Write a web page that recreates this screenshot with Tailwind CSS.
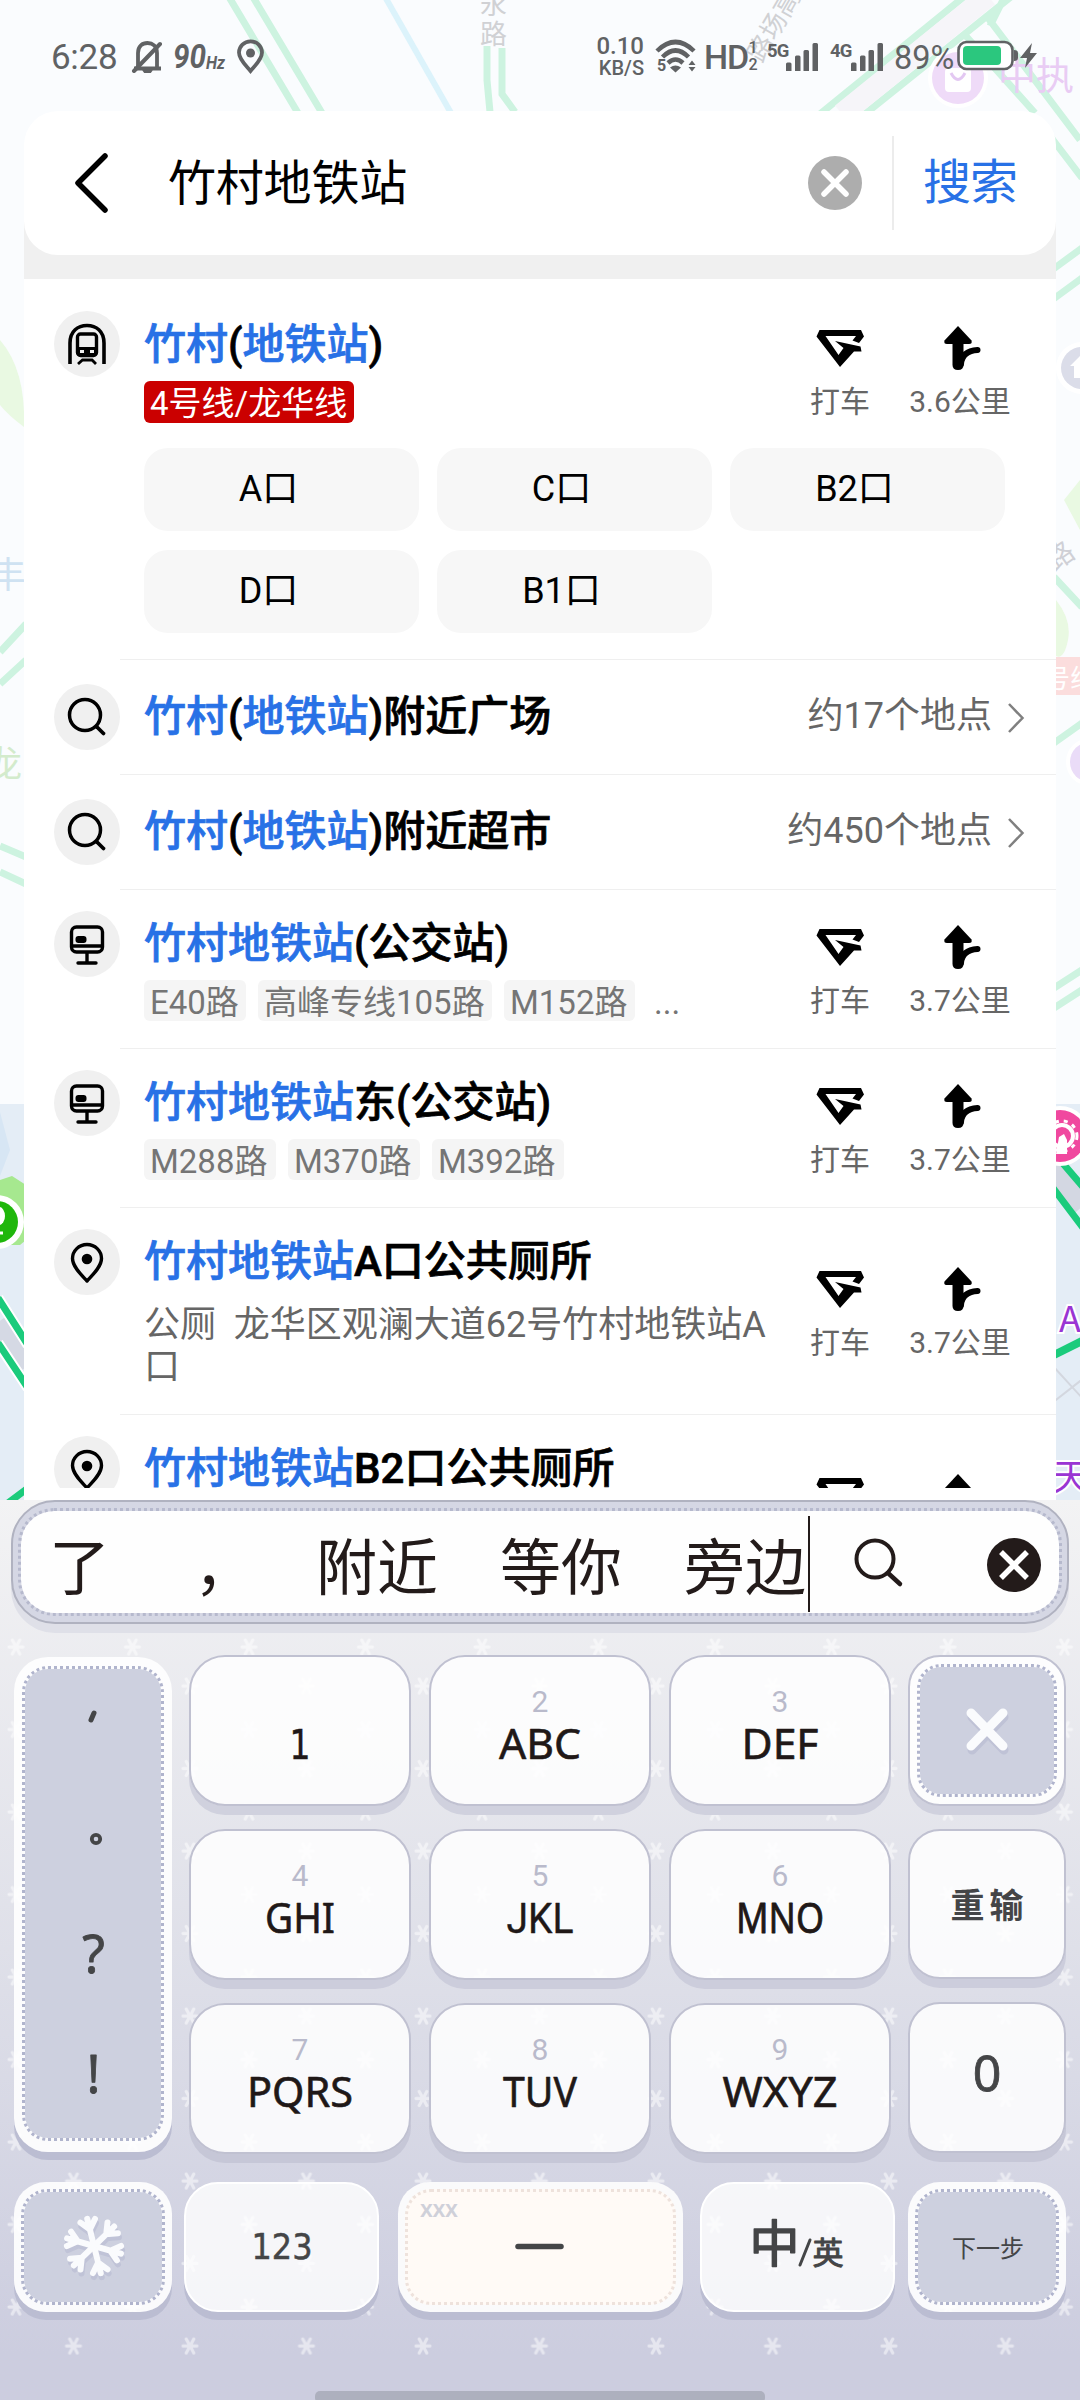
<!DOCTYPE html>
<html lang="zh-CN">
<head>
<meta charset="utf-8">
<title>搜索</title>
<script src="https://cdn.jsdelivr.net/npm/@tailwindcss/browser@4"></script>
</head>
<body class="bg-[#fafcfe] font-[Roboto,'Noto_Sans_CJK_SC',sans-serif]">
<svg width="0" height="0" class="absolute">
  <defs>
    <symbol id="taxi" viewBox="0 0 48 44"><path d="M3.500 4H45L48 10.500 43 17 36.500 14.500 40 10H9.500L22.500 29 27.500 22 19 15 44.500 20.500 45.500 25.500H38L24 41 0.500 10.500Z" fill="#000"/></symbol>
    <symbol id="route" viewBox="0 0 44 44"><path d="M20 0L33.500 14.500Q34.500 18 31 18H9Q5.500 18 6.500 14.500Z" fill="#000"/><path d="M14.500 14H25.500V39Q25.500 44 20 44T14.500 39Z" fill="#000"/><path d="M23 38Q24 25 39.500 24" fill="none" stroke="#000" stroke-width="6" stroke-linecap="round"/></symbol>
    <symbol id="mag" viewBox="0 0 66 66"><circle cx="31" cy="31" r="15.500" fill="none" stroke="#000" stroke-width="3.500"/><path d="M43 43L49.500 49.500" stroke="#000" stroke-width="3.800" stroke-linecap="round"/></symbol>
    <symbol id="bus" viewBox="0 0 66 66"><g fill="none" stroke="#000" stroke-width="3.400" stroke-linecap="round"><rect x="17.500" y="16" width="31" height="25" rx="5"/><path d="M18 35H48M33 42V51M24 52H42"/></g><rect x="21.500" y="25" width="11" height="7" rx="3" fill="#000"/></symbol>
    <symbol id="pin" viewBox="0 0 66 66"><path d="M33 52C28 46.500 18.500 38 18.500 29.500A14.500 14 0 0 1 47.500 29.500C47.500 38 38 46.500 33 52Z" fill="none" stroke="#000" stroke-width="3.400" stroke-linejoin="round"/><circle cx="33" cy="30" r="5.300" fill="#000"/></symbol>
    <symbol id="metro" viewBox="0 0 66 66"><g fill="none" stroke="#000"><path d="M16 53V32C16 20 24 14.500 33 14.500S50 20 50 32V53" stroke-width="3.600"/><rect x="23.500" y="23" width="19" height="21.500" rx="3" stroke-width="3.400"/><path d="M24 53L28.500 49H38L42 53" stroke-width="2.800"/></g><path d="M24 36H42V43H24Z" fill="#000"/><rect x="26" y="39" width="4" height="3" fill="#eee"/><rect x="36" y="39" width="4" height="3" fill="#eee"/></symbol>
    <symbol id="chev" viewBox="0 0 18 32"><path d="M2 2L15.500 16 2 30" fill="none" stroke="#808080" stroke-width="2.500"/></symbol>
    <symbol id="bars" viewBox="0 0 32 28"><path d="M0 21Q0 19.500 1.500 19.500H4Q5.500 19.500 5.500 21V28H0ZM9 14Q9 12.500 10.500 12.500H13Q14.500 12.500 14.500 14V28H9ZM17.500 8.500Q17.500 7 19 7H21.500Q23 7 23 8.500V28H17.500ZM26.500 1.500Q26.500 0 28 0H30.500Q32 0 32 1.500V28H26.500Z" fill="#5f6163"/></symbol>
  </defs>
</svg>

<div class="relative w-[1080px] h-[2400px] overflow-hidden flex flex-col">
  <!-- map behind the panels -->
  <svg class="absolute left-0 top-0" width="1080" height="1500" viewBox="0 0 1080 1500" font-family="'Noto Sans CJK SC',sans-serif">
    <rect width="1080" height="1500" fill="#fafcfe"/>
    <rect x="0" y="1104" width="1080" height="396" fill="#e4edf6"/>
    <g fill="none" stroke="#cdf3e0" stroke-width="7">
      <path d="M226 -8L298 113M250 -8L322 113"/>
      <path d="M487 46V80L490 112M502 48V94L515 112"/>
      <path d="M820 114L965 -4M865 114L1012 -4M988 18L1080 140M965 35L1035 113M1003 0L990 26" />
      <path d="M1050 136L1082 178M1052 270L1082 248M1052 300L1082 278M0 652L26 624M0 684L26 660M0 846L26 857M0 872L26 884"/>
      <path d="M1054 577L1082 607M1054 743L1082 723M1054 988L1082 970M1054 1008L1082 990"/>
    </g>
    <path d="M842 114L988 -4" stroke="#f6f5f9" stroke-width="22"/>
    <path d="M384 -5L451 113" stroke="#dcf3fb" stroke-width="6"/>
    <path d="M0 340Q26 370 24 427Q8 415 0 405Z" fill="#e9f9e2"/>
    <path d="M1080 480L1064 500 1080 530ZM1056 600Q1072 620 1068 640T1056 656Z" fill="#e9f9e2"/>
    <g fill="#d0d1d4" font-size="27"><text x="480" y="14">永</text><text x="480" y="44">路</text>
      <text transform="translate(762 64) rotate(-60)" font-size="26">路场高</text></g>
    <text x="-10" y="588" font-size="36" fill="#cfe2f2">丰</text>
    <text x="-14" y="777" font-size="36" fill="#d3ebcc">龙</text>
    <text transform="translate(1054 572) rotate(-35)" font-size="28" fill="#cfd0d6">路</text>
    <circle cx="958" cy="78" r="30" fill="#fff"/><circle cx="958" cy="78" r="26" fill="#efdbf8"/>
    <rect x="945" y="68" width="26" height="24" rx="4" fill="#fff"/><path d="M951 73Q958 86 965 73" fill="none" stroke="#e3c8f2" stroke-width="3"/>
    <text x="998" y="89" font-size="38" fill="#e9ccf4">中执</text>
    <circle cx="1082" cy="368" r="26" fill="#fff"/><circle cx="1082" cy="368" r="21" fill="#dbdde9"/><path d="M1070 366L1080 356V378H1074V366Z" fill="#fff"/>
    <rect x="1054" y="657" width="26" height="38" fill="#fbdddd"/><text x="1044" y="688" font-size="26" fill="#fff">号线</text>
    <circle cx="1090" cy="762" r="24" fill="#fff"/><circle cx="1090" cy="762" r="20" fill="#eadcf8"/>
    <!-- unfaded strip beside the lower rows -->
    <path d="M0 1112L10 1150 0 1176Z" fill="#d7e6f4"/>
    <path d="M0 1180L12 1176 26 1185V1240L20 1245H0Z" fill="#a6e88f"/>
    <circle cx="-3" cy="1222" r="27" fill="#fff"/><circle cx="-3" cy="1222" r="21" fill="#1fb70b"/><ellipse cx="-1" cy="1216" rx="6" ry="9" fill="#fff"/><path d="M-4 1233H3" stroke="#fff" stroke-width="3"/>
    <path d="M-2 1322L28 1366" stroke="#d5d9e4" stroke-width="26"/>
    <path d="M-2 1298L28 1345M-2 1343L28 1388" stroke="#fff" stroke-width="11"/>
    <path d="M-2 1298L28 1345M-2 1343L28 1388M8 1503L28 1488" stroke="#1bcb7c" stroke-width="7"/>
    <path d="M1050 1165L1084 1205" stroke="#d3d7e2" stroke-width="26"/>
    <path d="M1060 1160L1084 1188M1050 1184L1084 1229" stroke="#1bcb7c" stroke-width="7"/>
    <circle cx="1060" cy="1136" r="30" fill="#fff"/><circle cx="1060" cy="1136" r="26" fill="#f0489f"/>
    <circle cx="1062" cy="1136" r="11" fill="none" stroke="#fff" stroke-width="4"/><circle cx="1062" cy="1136" r="15" fill="none" stroke="#fff" stroke-width="3" stroke-dasharray="4 5"/><path d="M1059 1137L1064 1134 1067 1140V1154H1056Z" fill="#fff"/>
    <path d="M1052 1356L1084 1340" stroke="#1bcb7c" stroke-width="8"/>
    <path d="M1052 1403L1084 1378M1052 1365L1084 1400" stroke="#d3d7df" stroke-width="2"/>
    <text x="1059" y="1332" font-size="36" fill="#9a35d3" stroke="#fff" stroke-width="4" paint-order="stroke">A</text>
    <text x="1053" y="1490" font-size="36" fill="#9a35d3" stroke="#fff" stroke-width="4" paint-order="stroke">天</text>
  </svg>

  <!-- status bar -->
  <header class="relative h-[111px] shrink-0 flex items-start text-[#606264]">
    <div class="ml-[51px] mt-[37px] h-[42px] leading-[42px] text-[35px] w-[72px] tracking-[-0.3px]">6:28</div>
    <svg class="ml-[8px] mt-[39px]" width="32" height="34" viewBox="0 0 32 34"><path d="M7 28V14C7 7 11.500 4 16.500 4S26 7 26 14V29M3 29.500H30" fill="none" stroke="#606264" stroke-width="3.800"/><path d="M11 30H22Q21 35 16.500 35T11 30Z" fill="#606264"/><path d="M3 32L29 5" stroke="#606264" stroke-width="4" stroke-linecap="round"/></svg>
    <svg class="ml-[8px] mt-[39px]" width="56" height="34" fill="#606264" font-family="Roboto" font-style="italic" font-weight="700"><text x="2" y="29" font-size="34" textLength="33" lengthAdjust="spacingAndGlyphs">90</text><text x="35" y="29.500" font-size="19" textLength="19" lengthAdjust="spacingAndGlyphs" font-weight="700">Hz</text></svg>
    <svg class="ml-[10px] mt-[39px]" width="27" height="35" viewBox="0 0 27 35"><path d="M13.500 32C9 26.500 2 20.500 2 13.500A11.500 11.200 0 0 1 25 13.500C25 20.500 18 26.500 13.500 32Z" fill="none" stroke="#606264" stroke-width="3.800"/><circle cx="13.500" cy="14" r="4.500" fill="#606264"/></svg>
    <div class="ml-[325px] mt-[33px] w-[56px] text-right font-medium pr-[1px]">
      <div class="text-[24px] leading-[26px]">0.10</div><div class="text-[20px] leading-[16px] pt-[1px]">KB/S</div>
    </div>
    <svg class="ml-[10px] mt-[39px]" width="42" height="35" viewBox="0 0 42 35"><g fill="none" stroke="#606264" stroke-width="4.500"><path d="M2 12Q20.500 -6 39 12M7.500 18Q20.500 5 33.500 18M13 24Q20.500 17 28 24"/></g><path d="M15 28.500Q20.500 24.500 26 28.500L20.500 33.500Z" fill="#606264"/><text x="2" y="32" font-size="16" font-weight="700" font-family="Roboto" fill="#606264">5</text><path d="M33.500 26L37 21.500 40.500 26ZM33.500 28L37 32.500 40.500 28Z" fill="#606264"/></svg>
    <div class="ml-[7px] mt-[36px] text-[34px] leading-[42px] font-medium w-[43px] tracking-[-1.2px]">HD</div>
    <div class="mt-[39px] w-[12px] text-[16px] leading-[17px] font-medium text-center"><div>1</div><div>2</div></div>
    <div class="ml-[8px] mt-[39px] w-[22px] text-[18.500px] leading-[24px] font-bold tracking-[-0.8px]">5G</div>
    <svg class="ml-[-3px] mt-[43px]" width="32" height="28"><use href="#bars"/></svg>
    <div class="ml-[12px] mt-[39px] w-[22px] text-[18.500px] leading-[24px] font-bold tracking-[-0.8px]">4G</div>
    <svg class="ml-[-1px] mt-[43px]" width="32" height="28"><use href="#bars"/></svg>
    <div class="ml-[11px] mt-[37px] w-[63px] text-[32.500px] leading-[42px]">89%</div>
    <svg class="mt-[39px]" width="82" height="34" viewBox="0 0 82 34"><rect x="1.500" y="3" width="54" height="27" rx="8" fill="#fff" stroke="#606264" stroke-width="2.600"/><rect x="6" y="7" width="38" height="19" rx="4" fill="#2bc77e"/><path d="M57 11Q61 11 61 14V19Q61 22 57 22Z" fill="#606264"/><path d="M75 4L63 19H70L68 29 80 14H73Z" fill="#606264"/></svg>
  </header>

  <!-- search panel -->
  <main class="relative mx-[24px] h-[1389px] shrink-0 flex flex-col overflow-hidden">
    <div class="absolute inset-x-0 top-[72px] h-[96px] bg-[#f0f0f0]"></div>
    <div class="relative h-[144px] shrink-0 rounded-[34px] bg-white flex items-center">
      <svg class="ml-[47px]" width="40" height="62" viewBox="0 0 40 62"><path d="M34 4L7 31 34 58" fill="none" stroke="#000" stroke-width="5.500" stroke-linecap="round" stroke-linejoin="round"/></svg>
      <div class="ml-[57px] mt-[2px] w-[600px] text-[48px] leading-[60px] tracking-[-0.2px] text-black">竹村地铁站</div>
      <svg class="ml-[37px] -mt-px" width="60" height="60" viewBox="0 0 60 60"><circle cx="30" cy="30" r="27" fill="#adadad"/><path d="M19 19L41 41M41 19L19 41" stroke="#fff" stroke-width="5.500" stroke-linecap="round"/></svg>
      <div class="ml-[27px] w-[2px] h-[94px] bg-[#ececec]"></div>
      <div class="ml-[29px] text-[48px] leading-[60px] text-[#2871e6] tracking-[-1px]">搜索</div>
    </div>
    <div class="relative mt-[24px] h-[1221px] bg-white">
     <div class="h-[1209px] overflow-hidden">
      <section class="h-[381px] flex">
        <div class="w-[96px] shrink-0 pl-[30px] pt-[32px]"><svg width="66" height="66" class="rounded-full bg-[#f0f0f0]"><use href="#metro"/></svg></div>
        <div class="relative flex-1 border-b border-[#efefef] pl-[24px] pt-[39px]">
          <div class="flex justify-between">
            <div>
              <h2 class="pt-[2px] text-[42px] leading-[50px] font-medium text-black whitespace-nowrap [-webkit-text-stroke:0.7px]"><span class="text-[#2871e6]">竹村</span>(<span class="text-[#2871e6]">地铁站</span>)</h2>
              <div class="mt-[11px] w-[210px] h-[42px] rounded-[6px] bg-[#cb0000] pl-[6px] text-[33px] leading-[46px] text-white whitespace-nowrap">4号线/龙华线</div>
            </div>
            <div class="mt-[8px] pr-[45px] flex gap-[39px] text-[30px] leading-[36px] text-[#666]">
              <div class="flex flex-col items-center gap-[14px] w-[60px] whitespace-nowrap"><svg width="48" height="44"><use href="#taxi"/></svg><span>打车</span></div>
              <div class="flex flex-col items-center gap-[14px] w-[102px] whitespace-nowrap"><svg width="44" height="44"><use href="#route"/></svg><span>3.6公里</span></div>
            </div>
          </div>
          <div class="mt-[25px] w-[861px] grid grid-cols-3 gap-x-[18px] gap-y-[19px] text-[36px] leading-[83px] text-center text-black">
            <div class="h-[83px] rounded-[24px] bg-[#f7f7f7] pr-[26px]">A口</div><div class="h-[83px] rounded-[24px] bg-[#f7f7f7] pr-[26px]">C口</div><div class="h-[83px] rounded-[24px] bg-[#f7f7f7] pr-[26px]">B2口</div>
            <div class="h-[83px] rounded-[24px] bg-[#f7f7f7] pr-[26px]">D口</div><div class="h-[83px] rounded-[24px] bg-[#f7f7f7] pr-[26px]">B1口</div>
          </div>
        </div>
      </section>
      <section class="h-[115px] flex">
        <div class="w-[96px] shrink-0 pl-[30px] pt-[24px]"><svg width="66" height="66" class="rounded-full bg-[#f0f0f0]"><use href="#mag"/></svg></div>
        <div class="flex-1 border-b border-[#efefef] pl-[24px] pt-[31px] pr-[31px] flex justify-between">
          <h2 class="pt-px text-[42px] leading-[50px] font-medium text-black [-webkit-text-stroke:0.7px]"><span class="text-[#2871e6]">竹村</span>(<span class="text-[#2871e6]">地铁站</span>)附近广场</h2>
          <div class="flex h-[50px] text-[36px] leading-[50px] text-[#666]">约17个地点<svg class="ml-[15px] mt-[11px]" width="18" height="32"><use href="#chev"/></svg></div>
        </div>
      </section>
      <section class="h-[115px] flex">
        <div class="w-[96px] shrink-0 pl-[30px] pt-[24px]"><svg width="66" height="66" class="rounded-full bg-[#f0f0f0]"><use href="#mag"/></svg></div>
        <div class="flex-1 border-b border-[#efefef] pl-[24px] pt-[31px] pr-[31px] flex justify-between">
          <h2 class="pt-px text-[42px] leading-[50px] font-medium text-black [-webkit-text-stroke:0.7px]"><span class="text-[#2871e6]">竹村</span>(<span class="text-[#2871e6]">地铁站</span>)附近超市</h2>
          <div class="flex h-[50px] text-[36px] leading-[50px] text-[#666]">约450个地点<svg class="ml-[15px] mt-[11px]" width="18" height="32"><use href="#chev"/></svg></div>
        </div>
      </section>
      <section class="h-[159px] flex">
        <div class="w-[96px] shrink-0 pl-[30px] pt-[21px]"><svg width="66" height="66" class="rounded-full bg-[#f0f0f0]"><use href="#bus"/></svg></div>
        <div class="flex-1 border-b border-[#efefef] pl-[24px] flex justify-between">
          <div class="pt-[29px]">
            <h2 class="text-[42px] leading-[50px] font-medium text-black [-webkit-text-stroke:0.7px]"><span class="text-[#2871e6]">竹村地铁站</span>(公交站)</h2>
            <div class="mt-[11px] h-[41px] flex gap-[12px] text-[33px] leading-[45px] text-[#757575] whitespace-nowrap"><span class="w-[102px] h-[41px] rounded-[6px] bg-[#f5f5f5] px-[6px]">E40路</span><span class="w-[234px] h-[41px] rounded-[6px] bg-[#f5f5f5] px-[6px]">高峰专线105路</span><span class="w-[131px] h-[41px] rounded-[6px] bg-[#f5f5f5] px-[6px]">M152路</span><span class="ml-[7px]">...</span></div>
          </div>
          <div class="mt-[35px] pr-[45px] flex gap-[39px] text-[30px] leading-[36px] text-[#666]">
            <div class="flex flex-col items-center gap-[14px] w-[60px] whitespace-nowrap"><svg width="48" height="44"><use href="#taxi"/></svg><span>打车</span></div>
            <div class="flex flex-col items-center gap-[14px] w-[102px] whitespace-nowrap"><svg width="44" height="44"><use href="#route"/></svg><span>3.7公里</span></div>
          </div>
        </div>
      </section>
      <section class="h-[159px] flex">
        <div class="w-[96px] shrink-0 pl-[30px] pt-[21px]"><svg width="66" height="66" class="rounded-full bg-[#f0f0f0]"><use href="#bus"/></svg></div>
        <div class="flex-1 border-b border-[#efefef] pl-[24px] flex justify-between">
          <div class="pt-[29px]">
            <h2 class="text-[42px] leading-[50px] font-medium text-black [-webkit-text-stroke:0.7px]"><span class="text-[#2871e6]">竹村地铁站</span>东(公交站)</h2>
            <div class="mt-[11px] h-[41px] flex gap-[12px] text-[33px] leading-[45px] text-[#757575] whitespace-nowrap"><span class="w-[132px] h-[41px] rounded-[6px] bg-[#f5f5f5] px-[6px]">M288路</span><span class="w-[132px] h-[41px] rounded-[6px] bg-[#f5f5f5] px-[6px]">M370路</span><span class="w-[132px] h-[41px] rounded-[6px] bg-[#f5f5f5] px-[6px]">M392路</span></div>
          </div>
          <div class="mt-[35px] pr-[45px] flex gap-[39px] text-[30px] leading-[36px] text-[#666]">
            <div class="flex flex-col items-center gap-[14px] w-[60px] whitespace-nowrap"><svg width="48" height="44"><use href="#taxi"/></svg><span>打车</span></div>
            <div class="flex flex-col items-center gap-[14px] w-[102px] whitespace-nowrap"><svg width="44" height="44"><use href="#route"/></svg><span>3.7公里</span></div>
          </div>
        </div>
      </section>
      <section class="h-[207px] flex">
        <div class="w-[96px] shrink-0 pl-[30px] pt-[21px]"><svg width="66" height="66" class="rounded-full bg-[#f0f0f0]"><use href="#pin"/></svg></div>
        <div class="flex-1 border-b border-[#efefef] pl-[24px] flex justify-between">
          <div class="pt-[29px]">
            <h2 class="text-[42px] leading-[50px] font-medium text-black [-webkit-text-stroke:0.7px]"><span class="text-[#2871e6]">竹村地铁站</span>A口公共厕所</h2>
            <p class="mt-[17px] text-[36px] leading-[42px] text-[#666] whitespace-pre">公厕  龙华区观澜大道62号竹村地铁站A<br>口</p>
          </div>
          <div class="mt-[59px] pr-[45px] flex gap-[39px] text-[30px] leading-[36px] text-[#666]">
            <div class="flex flex-col items-center gap-[14px] w-[60px] whitespace-nowrap"><svg width="48" height="44"><use href="#taxi"/></svg><span>打车</span></div>
            <div class="flex flex-col items-center gap-[14px] w-[102px] whitespace-nowrap"><svg width="44" height="44"><use href="#route"/></svg><span>3.7公里</span></div>
          </div>
        </div>
      </section>
      <section class="h-[207px] flex">
        <div class="w-[96px] shrink-0 pl-[30px] pt-[21px]"><svg width="66" height="66" class="rounded-full bg-[#f0f0f0]"><use href="#pin"/></svg></div>
        <div class="flex-1 pl-[24px] flex justify-between">
          <h2 class="pt-[29px] text-[42px] leading-[50px] font-medium text-black [-webkit-text-stroke:0.7px]"><span class="text-[#2871e6]">竹村地铁站</span>B2口公共厕所</h2>
          <div class="mt-[59px] pr-[45px] flex gap-[39px]">
            <div class="flex justify-center w-[60px]"><svg width="48" height="44"><use href="#taxi"/></svg></div>
            <div class="flex justify-center w-[102px]"><svg width="44" height="44"><use href="#route"/></svg></div>
          </div>
        </div>
      </section>
     </div>
    </div>
  </main>

  <!-- keyboard -->
  <div class="relative h-[900px] shrink-0 bg-linear-to-b from-[#f3f3f4] via-[#dfe0e9] via-50% to-[#cccddf] to-95%">
    <svg class="absolute left-0 top-0" width="1080" height="900">
      <defs>
        <g id="star" stroke="#fff" stroke-width="3.200" stroke-linecap="round"><path d="M-7 0H7M-3.800 -7L3.800 7M3.800 -7L-3.800 7"/></g>
        <pattern id="snow" width="116.500" height="82.500" patternUnits="userSpaceOnUse" x="-42" y="127">
          <use href="#star" x="115.500" y="59"/><use href="#star" x="-1" y="59"/><use href="#star" x="58" y="20"/>
        </pattern>
      </defs>
      <rect y="135" width="1080" height="726" fill="url(#snow)" opacity=".5"/>
    </svg>

    <div class="relative ml-[11px] w-[1058px] h-[124px] rounded-[44px] border-2 border-[#b0b2c0] bg-[#d5d7e4] px-[5px] py-[6px] shadow-[0_9px_0_#dfe0e8]">
      <div class="h-full rounded-[36px] border-[3px] border-dotted border-[#b6b9cd] bg-[#fefefe] bg-clip-padding flex items-center text-[61px] leading-[80px] text-[#231b1a] font-['Noto_Sans_CJK_SC',sans-serif] whitespace-nowrap">
        <span class="mt-[4px] ml-[28px] w-[145px]">了</span><span class="mt-[4px] w-[122px]">，</span><span class="mt-[4px] w-[184px]">附近</span><span class="mt-[4px] w-[184px]">等你</span><span class="mt-[4px] w-[123px]">旁边</span>
        <span class="w-[2px] h-[96px] bg-[#231b1a] ml-px mt-[4px]"></span>
        <svg class="ml-[41px] mt-[6px]" width="56" height="56" viewBox="0 0 56 56"><circle cx="24" cy="22" r="18.500" fill="none" stroke="#231b1a" stroke-width="4"/><path d="M37 36L49 47" stroke="#231b1a" stroke-width="4.500" stroke-linecap="round"/></svg>
        <svg class="ml-[79px] mt-[6px]" width="56" height="56" viewBox="0 0 56 56"><circle cx="28" cy="28" r="27" fill="#231b1a"/><path d="M15 15L41 41M41 15L15 41" stroke="#fff" stroke-width="5.500"/></svg>
      </div>
    </div>

    <div class="relative mt-[31px] mx-[14px] flex h-[498px]">
      <div class="mt-[2px] w-[158px] h-[495px] rounded-[34px] bg-white/90 shadow-[0_8px_0_#bbbdd2] px-[8px] pt-[9px] pb-[11px]">
        <div class="h-full rounded-[26px] border-[3px] border-dotted border-[#b0b4cd] bg-[#cdd0df] bg-clip-padding">
          <svg width="136" height="469" viewBox="0 0 136 469"><path d="M66 51L69 44" stroke="#444547" stroke-width="5" stroke-linecap="round"/><circle cx="71" cy="170" r="4.200" fill="none" stroke="#444547" stroke-width="3.800"/><g font-family="Noto Sans" font-size="52" fill="#444547" stroke="#444547" stroke-width=".8" text-anchor="middle" stroke-linejoin="round"><text x="68.500" y="304">?</text><text x="68.500" y="424">!</text></g></svg>
        </div>
      </div>
      <div class="ml-[17px] w-[702px] grid grid-cols-3 gap-x-[18px] gap-y-[23px] content-start">
        <div class="h-[151px] rounded-[36px] border-2 border-[#c0c1d1] bg-white/85 shadow-[0_9px_0_#d0d1de]"><svg width="218" height="147" font-family="DejaVu Sans" font-size="40" fill="#201817" text-anchor="middle"><text x="109" y="102" textLength="21" lengthAdjust="spacingAndGlyphs" stroke="#201817" stroke-width=".5">1</text></svg></div>
        <div class="h-[151px] rounded-[36px] border-2 border-[#c0c1d1] bg-white/85 shadow-[0_9px_0_#d0d1de]"><svg width="218" height="147" font-family="Noto Sans" fill="#201817" text-anchor="middle" stroke-linejoin="round"><text x="109" y="55" font-size="30" fill="#b9bacb" font-family="Roboto">2</text><text x="109" y="102" font-size="41" stroke="#201817" stroke-width=".6" textLength="82" lengthAdjust="spacingAndGlyphs">ABC</text></svg></div>
        <div class="h-[151px] rounded-[36px] border-2 border-[#c0c1d1] bg-white/85 shadow-[0_9px_0_#d0d1de]"><svg width="218" height="147" font-family="Noto Sans" fill="#201817" text-anchor="middle" stroke-linejoin="round"><text x="109" y="55" font-size="30" fill="#b9bacb" font-family="Roboto">3</text><text x="109" y="102" font-size="41" stroke="#201817" stroke-width=".6" textLength="77" lengthAdjust="spacingAndGlyphs">DEF</text></svg></div>
        <div class="h-[151px] rounded-[36px] border-2 border-[#c0c1d1] bg-white/85 shadow-[0_9px_0_#cccddc]"><svg width="218" height="147" font-family="Noto Sans" fill="#201817" text-anchor="middle" stroke-linejoin="round"><text x="109" y="55" font-size="30" fill="#b9bacb" font-family="Roboto">4</text><text x="109" y="102" font-size="41" stroke="#201817" stroke-width=".6" textLength="70" lengthAdjust="spacingAndGlyphs">GHI</text></svg></div>
        <div class="h-[151px] rounded-[36px] border-2 border-[#c0c1d1] bg-white/85 shadow-[0_9px_0_#cccddc]"><svg width="218" height="147" font-family="Verdana, 'DejaVu Sans'" fill="#201817" text-anchor="middle" stroke-linejoin="round"><text x="109" y="55" font-size="30" fill="#b9bacb" font-family="Roboto">5</text><text x="109" y="102" font-size="42" font-family="Roboto" stroke="#201817" stroke-width=".4" textLength="67" lengthAdjust="spacingAndGlyphs">JKL</text></svg></div>
        <div class="h-[151px] rounded-[36px] border-2 border-[#c0c1d1] bg-white/85 shadow-[0_9px_0_#cccddc]"><svg width="218" height="147" font-family="Noto Sans" fill="#201817" text-anchor="middle" stroke-linejoin="round"><text x="109" y="55" font-size="30" fill="#b9bacb" font-family="Roboto">6</text><text x="109" y="102" font-size="41" stroke="#201817" stroke-width=".8" textLength="88" lengthAdjust="spacingAndGlyphs">MNO</text></svg></div>
        <div class="h-[151px] rounded-[36px] border-2 border-[#c0c1d1] bg-white/85 shadow-[0_9px_0_#c6c7d7]"><svg width="218" height="147" font-family="Noto Sans" fill="#201817" text-anchor="middle" stroke-linejoin="round"><text x="109" y="55" font-size="30" fill="#b9bacb" font-family="Roboto">7</text><text x="109" y="102" font-size="41" stroke="#201817" stroke-width=".6" textLength="106" lengthAdjust="spacingAndGlyphs">PQRS</text></svg></div>
        <div class="h-[151px] rounded-[36px] border-2 border-[#c0c1d1] bg-white/85 shadow-[0_9px_0_#c6c7d7]"><svg width="218" height="147" font-family="Noto Sans" fill="#201817" text-anchor="middle" stroke-linejoin="round"><text x="109" y="55" font-size="30" fill="#b9bacb" font-family="Roboto">8</text><text x="109" y="102" font-size="41" stroke="#201817" stroke-width=".6" textLength="74" lengthAdjust="spacingAndGlyphs">TUV</text></svg></div>
        <div class="h-[151px] rounded-[36px] border-2 border-[#c0c1d1] bg-white/85 shadow-[0_9px_0_#c6c7d7]"><svg width="218" height="147" font-family="Noto Sans" fill="#201817" text-anchor="middle" stroke-linejoin="round"><text x="109" y="55" font-size="30" fill="#b9bacb" font-family="Roboto">9</text><text x="109" y="102" font-size="41" stroke="#201817" stroke-width=".6" textLength="115" lengthAdjust="spacingAndGlyphs">WXYZ</text></svg></div>
      </div>
      <div class="ml-[17px] w-[158px] flex flex-col gap-[23px]">
        <div class="h-[151px] rounded-[32px] border-2 border-[#c0c1d1] bg-white/90 shadow-[0_9px_0_#d0d1de] p-[7px]"><div class="h-[133px] rounded-[24px] border-[3px] border-dotted border-[#b0b4cd] bg-[#cdd0df] bg-clip-padding"><svg width="134" height="127"><path d="M51 46L83 79M83 46L51 79" stroke="#bfc2d6" stroke-width="9" stroke-linecap="round" transform="translate(1 4)"/><path d="M51 46L83 79M83 46L51 79" stroke="#fafbfd" stroke-width="9" stroke-linecap="round"/></svg></div></div>
        <div class="h-[151px] rounded-[32px] border-2 border-[#c0c1d1] bg-white/85 shadow-[0_9px_0_#cccddc] flex items-center justify-center text-[34px] font-bold tracking-[5px] pl-[5px] pt-[4px] text-[#444547]">重输</div>
        <div class="h-[151px] rounded-[32px] border-2 border-[#c0c1d1] bg-white/85 shadow-[0_9px_0_#c6c7d7]"><svg width="154" height="147"><text x="77" y="87" text-anchor="middle" font-family="Noto Sans" font-size="50" fill="#444547" stroke="#444547" stroke-width=".8">0</text></svg></div>
      </div>
    </div>

    <div class="relative mt-[29px] mx-[14px] h-[130px] flex">
      <div class="w-[158px] rounded-[32px] bg-white/90 shadow-[0_8px_0_#bbbdd2] p-[7px]"><div class="h-full rounded-[26px] border-[3px] border-dotted border-[#b0b4cd] bg-[#cdd0df] bg-clip-padding">
        <svg width="138" height="110" viewBox="-69 -55 138 110"><defs><g id="arm"><path d="M0 0V-28M-7.500 -26L0 -17 7.500 -26"/></g><g id="flake" fill="none" stroke-width="6" stroke-linecap="round"><use href="#arm"/><use href="#arm" transform="rotate(60)"/><use href="#arm" transform="rotate(120)"/><use href="#arm" transform="rotate(180)"/><use href="#arm" transform="rotate(240)"/><use href="#arm" transform="rotate(300)"/></g></defs><use href="#flake" stroke="#c0c3d7" transform="translate(2 3) rotate(-14)"/><use href="#flake" stroke="#fafbfd" transform="translate(1 -1) rotate(-14)"/></svg></div></div>
      <div class="ml-[12px] w-[195px] rounded-[34px] border-2 border-white bg-white/80 shadow-[0_8px_0_#bbbdd2]"><svg width="191" height="126"><text x="96" y="75" text-anchor="middle" font-family="DejaVu Sans" font-size="35" fill="#444547" stroke="#444547" stroke-width=".5" textLength="61" lengthAdjust="spacingAndGlyphs">123</text></svg></div>
      <div class="relative ml-[19px] w-[285px] rounded-[32px] bg-[#fafafb] shadow-[0_8px_0_#bbbdd2] p-[7px]"><div class="h-full rounded-[26px] border-[3px] border-dotted border-[#eee2dc] bg-[#fffaf6]"><svg width="265" height="110"><text x="12" y="25" font-family="Noto Sans" font-size="23" font-weight="600" fill="#cfd0d9" textLength="38">xxx</text><path d="M110 54.500H153" stroke="#444547" stroke-width="5.500" stroke-linecap="round"/></svg></div></div>
      <div class="ml-[17px] w-[195px] rounded-[34px] border-2 border-white bg-white/80 shadow-[0_8px_0_#bbbdd2]"><svg width="191" height="126" font-family="'Noto Sans CJK SC',sans-serif" fill="#444547" stroke="#444547" stroke-linejoin="round"><text x="47.500" y="78" font-size="50" stroke-width="1.500">中</text><path d="M98 81L108 56" stroke-width="3" stroke-linecap="round"/><text x="110.500" y="80" font-size="31" stroke-width="1">英</text></svg></div>
      <div class="ml-[13px] w-[158px] rounded-[32px] bg-white/90 shadow-[0_8px_0_#bbbdd2] p-[7px]"><div class="h-full rounded-[26px] border-[3px] border-dotted border-[#b0b4cd] bg-[#cdd0df] bg-clip-padding flex items-center justify-center text-[24px] text-[#444547] pl-[2px] pt-[4px]">下一步</div></div>
    </div>
    <div class="absolute left-[315px] top-[891px] w-[450px] h-[12px] rounded-[5px] bg-[#adb0be]"></div>
  </div>
</div>
</body>
</html>
